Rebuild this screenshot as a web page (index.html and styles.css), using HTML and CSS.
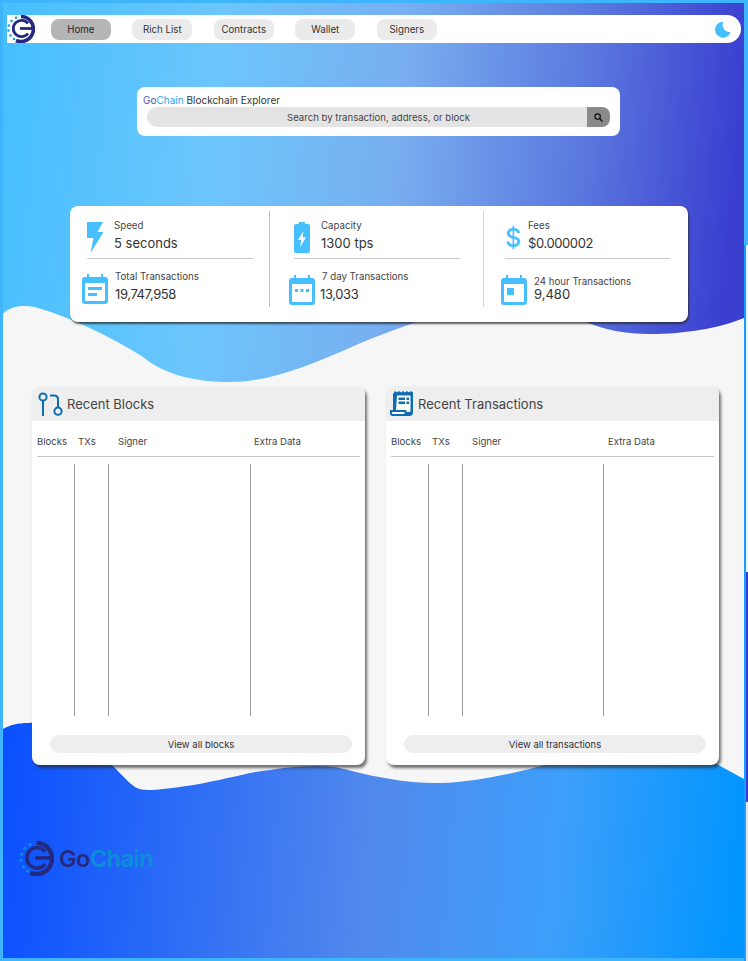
FILE: index.html
```html
<!DOCTYPE html>
<html lang="en">
<head>
    <meta charset="UTF-8">
    <meta name="viewport" content="width=device-width, initial-scale=1.0">
    <title>GoChain Blockchain Explorer</title>
    <link rel="stylesheet" href="styles.css">
</head>
<body>
    <div class="page">
        <!-- gradient backdrop and the two waves -->
        <svg class="backdrop" viewBox="0 0 748 961">
            <defs>
                <linearGradient id="top-grad" gradientUnits="userSpaceOnUse" x1="0" y1="0" x2="744" y2="70">
                    <stop offset="0" stop-color="#45bfff"/>
                    <stop offset="0.3" stop-color="#6cc6fb"/>
                    <stop offset="0.55" stop-color="#78aeef"/>
                    <stop offset="0.8" stop-color="#5a77de"/>
                    <stop offset="1" stop-color="#3a3fd0"/>
                </linearGradient>
                <linearGradient id="bottom-grad" gradientUnits="userSpaceOnUse" x1="0" y1="800" x2="744" y2="860">
                    <stop offset="0" stop-color="#0a50ff"/>
                    <stop offset="0.5" stop-color="#5189ec"/>
                    <stop offset="0.75" stop-color="#3d9ffa"/>
                    <stop offset="1" stop-color="#0095ff"/>
                </linearGradient>
            </defs>
            <rect width="748" height="961" fill="#3eb4fb"/>
            <rect x="3" y="3" width="741" height="420" fill="url(#top-grad)"/>
            <path fill="#f6f6f6" d="M3 314 C10 306 24 304 38 308 C72 318 110 336 143 357 C165 375 195 382 230 382 C270 382 310 365 345 350 C370 338 395 330 416 322 L586 322 C605 330 625 334 650 334 C685 334 720 328 744 318 L744 800 L3 800 Z"/>
            <path fill="url(#bottom-grad)" d="M3 729 C10 725 18 723 28 723 L60 720 L113 766 C122 775 128 782 135 787 C140 790 146 790 152 790 C190 787 215 781 250 773 C280 768 310 764 335 767 C350 770 365 775 385 778 C405 782 420 783 440 783 C475 782 510 774 545 765 L700 755 L744 779 L744 958 L3 958 Z"/>
            <rect x="744" y="245" width="2" height="716" fill="#1a9bff"/>
            <rect x="746" y="245" width="2" height="327" fill="#eaf6ff"/>
            <rect x="746" y="572" width="2" height="230" fill="#3a3fd0"/>
            <rect x="746" y="802" width="2" height="159" fill="#e8e8e8"/>
        </svg>

        <nav class="navbar">
            <svg class="nav-logo" viewBox="0 0 28 28">
                <path d="M14 1.5 A12.5 12.5 0 1 1 9 25.5" fill="none" stroke="#25297f" stroke-width="3.6"/>
                <path d="M21 8.5 A8.2 8.2 0 1 0 21 18.5" fill="none" stroke="#25297f" stroke-width="2.8"/>
                <path d="M13 13.5 H25" fill="none" stroke="#25297f" stroke-width="2.8"/>
                <g fill="#1e9be8">
                    <circle cx="9" cy="2.8" r="1.3"/><circle cx="4.6" cy="6" r="1.3"/>
                    <circle cx="2" cy="10.5" r="1.3"/><circle cx="1.5" cy="15.5" r="1.3"/>
                    <circle cx="3.5" cy="20.5" r="1.3"/><circle cx="7" cy="24" r="1.3"/>
                </g>
            </svg>
            <a class="nav-btn active">Home</a>
            <a class="nav-btn">Rich List</a>
            <a class="nav-btn">Contracts</a>
            <a class="nav-btn">Wallet</a>
            <a class="nav-btn">Signers</a>
            <svg class="moon" viewBox="0 0 16 16">
                <path d="M8.2 0.2 A8 8 0 1 0 15.6 10.6 A7.4 7.4 0 0 1 8.2 0.2 Z" fill="#45bfff"/>
            </svg>
        </nav>

        <section class="search-card">
            <div class="search-title"><span class="go">Go</span><span class="chain">Chain</span> Blockchain Explorer</div>
            <div class="search-bar">
                <div class="search-input">Search by transaction, address, or block</div>
                <div class="search-btn">
                    <svg viewBox="0 0 10 10" width="9" height="9">
                        <circle cx="4" cy="4" r="3" fill="none" stroke="#111" stroke-width="1.4"/>
                        <path d="M6.2 6.2 L9.4 9.4" stroke="#111" stroke-width="1.6"/>
                    </svg>
                </div>
            </div>
        </section>

        <section class="stats-card">
            <div class="stats-col">
                <div class="stat stat-top">
                    <div class="stat-icon">
                        <svg viewBox="0 0 17 31" width="17" height="31"><path d="M0 0 H16 L10.5 10 H16.5 L3.5 31 L6.5 16 H0 Z" fill="#45bfff"/></svg>
                    </div>
                    <div>
                        <div class="stat-label">Speed</div>
                        <div class="stat-value">5 seconds</div>
                    </div>
                </div>
                <div class="stat stat-bottom">
                    <svg class="cal" viewBox="0 0 26 30"><use href="#cal-shape"/><path d="M6 13 H20 V16 H6 Z M6 19 H15 V22 H6 Z" fill="#45bfff"/></svg>
                    <div>
                        <div class="stat-label">Total Transactions</div>
                        <div class="stat-value num">19,747,958</div>
                    </div>
                </div>
            </div>
            <div class="stats-col">
                <div class="stat stat-top">
                    <div class="stat-icon">
                        <svg viewBox="0 0 16 31" width="16" height="31">
                            <path d="M5 0 H11 V2 H14 Q16 2 16 4 V29 Q16 31 14 31 H2 Q0 31 0 29 V4 Q0 2 2 2 H5 Z" fill="#45bfff"/>
                            <path d="M9.5 9 L4 18 H7.2 L6.2 25 L12 15.5 H8.6 Z" fill="#fff"/>
                        </svg>
                    </div>
                    <div>
                        <div class="stat-label">Capacity</div>
                        <div class="stat-value">1300 tps</div>
                    </div>
                </div>
                <div class="stat stat-bottom">
                    <svg class="cal" viewBox="0 0 26 30"><use href="#cal-shape"/><path d="M6 14 H9 V17 H6 Z M11.5 14 H14.5 V17 H11.5 Z M17 14 H20 V17 H17 Z" fill="#45bfff"/></svg>
                    <div>
                        <div class="stat-label">7 day Transactions</div>
                        <div class="stat-value num pull">13,033</div>
                    </div>
                </div>
            </div>
            <div class="stats-col">
                <div class="stat stat-top">
                    <div class="stat-icon icon-dollar">$</div>
                    <div>
                        <div class="stat-label">Fees</div>
                        <div class="stat-value num">$0.000002</div>
                    </div>
                </div>
                <div class="stat stat-bottom">
                    <svg class="cal" viewBox="0 0 26 30"><use href="#cal-shape"/><path d="M6 13 H13 V20 H6 Z" fill="#45bfff"/></svg>
                    <div>
                        <div class="stat-label low">24 hour Transactions</div>
                        <div class="stat-value tight">9,480</div>
                    </div>
                </div>
            </div>
        </section>

        <svg class="defs-only">
            <defs>
                <path id="cal-shape" fill="#45bfff" fill-rule="evenodd" d="M5 0 H7 V3 H19 V0 H21 V3 H23 Q26 3 26 6 V27 Q26 30 23 30 H3 Q0 30 0 27 V6 Q0 3 3 3 H5 Z M3 9 V26 Q3 27 4 27 H22 Q23 27 23 26 V9 Z"/>
            </defs>
        </svg>

        <div class="tables">
            <section class="panel">
                <header class="panel-head">
                    <svg class="panel-icon" viewBox="0 0 25 26">
                        <g fill="none" stroke="#0f6cb0" stroke-width="2">
                            <circle cx="5" cy="6" r="3.6"/>
                            <path d="M5 9.6 V25"/>
                            <path d="M12 4.5 H16 Q20 4.5 20 8.5 V16.5"/>
                            <circle cx="20" cy="20.2" r="3.6"/>
                        </g>
                    </svg>
                    <h2>Recent Blocks</h2>
                </header>
                <div class="cols">
                    <span class="col-blocks">Blocks</span>
                    <span class="col-txs">TXs</span>
                    <span class="col-signer">Signer</span>
                    <span>Extra Data</span>
                </div>
                <div class="col-lines">
                    <i></i><i></i><i></i>
                </div>
                <a class="view-all">View all blocks</a>
            </section>

            <section class="panel">
                <header class="panel-head">
                    <svg class="panel-icon receipt" viewBox="0 0 24 26">
                        <path fill="#0f6cb0" d="M5 0 L7 1.5 L9 0 L11 1.5 L13 0 L15 1.5 L17 0 L19 1.5 L21 0 L23 1.5 V21 Q23 25 19.5 25 H3 Q0 25 0 22.5 V19 H3 V3 Z"/>
                        <path fill="#fff" d="M7 4.5 H20.5 V20 Q20.5 21 19 21 H16.5 V19 H6 Z M2 21 H14.5 V23 H3 Q2 23 2 22 Z"/>
                        <path fill="#0f6cb0" d="M8.5 6.5 H15 V9 H8.5 Z M16.5 6.5 H19 V9 H16.5 Z M8.5 10.5 H15 V13 H8.5 Z M16.5 10.5 H19 V13 H16.5 Z"/>
                    </svg>
                    <h2>Recent Transactions</h2>
                </header>
                <div class="cols">
                    <span class="col-blocks">Blocks</span>
                    <span class="col-txs">TXs</span>
                    <span class="col-signer">Signer</span>
                    <span>Extra Data</span>
                </div>
                <div class="col-lines">
                    <i></i><i></i><i></i>
                </div>
                <a class="view-all">View all transactions</a>
            </section>
        </div>

        <footer class="footer">
            <svg class="foot-logo" viewBox="0 0 28 28">
                <path d="M14 1.5 A12.5 12.5 0 1 1 9 25.5" fill="none" stroke="#25297f" stroke-width="3.6"/>
                <path d="M21 8.5 A8.2 8.2 0 1 0 21 18.5" fill="none" stroke="#25297f" stroke-width="2.8"/>
                <path d="M13 13.5 H25" fill="none" stroke="#25297f" stroke-width="2.8"/>
                <g fill="#0a8fd8">
                    <circle cx="9" cy="2.8" r="1.3"/><circle cx="4.6" cy="6" r="1.3"/>
                    <circle cx="2" cy="10.5" r="1.3"/><circle cx="1.5" cy="15.5" r="1.3"/>
                    <circle cx="3.5" cy="20.5" r="1.3"/><circle cx="7" cy="24" r="1.3"/>
                </g>
            </svg>
            <span class="foot-name"><span class="foot-go">Go</span><span class="foot-chain">Chain</span></span>
        </footer>
    </div>
</body>
</html>
```

FILE: styles.css
```css
* {
    box-sizing: border-box;
}
html, body {
    margin: 0;
    padding: 0;
}
body {
    font-family: Inter, "Open Sans", Arial, sans-serif;
    color: #333;
}
.page {
    position: relative;
    width: 748px;
    height: 961px;
    overflow: hidden;
    padding: 15px 7px 0 7px;
}
.backdrop {
    position: absolute;
    left: 0;
    top: 0;
    width: 748px;
    height: 961px;
}
.defs-only {
    position: absolute;
    width: 0;
    height: 0;
}

/* nav */
.navbar {
    position: relative;
    display: flex;
    align-items: center;
    height: 28px;
    background-color: #fff;
    border-radius: 0 14px 14px 0;
    width: 734px;
    padding-right: 10px;
}
.nav-logo {
    width: 28px;
    height: 28px;
    margin-right: 16px;
    flex: none;
}
.nav-btn {
    display: flex;
    align-items: center;
    justify-content: center;
    width: 59.6px;
    height: 21px;
    margin-right: 21.9px;
    border-radius: 8px;
    background-color: #ebebeb;
    font-size: 9.7px;
    color: #333;
}
.nav-btn.active {
    background-color: #b5b5b5;
    color: #222;
}
.moon {
    width: 16px;
    height: 17px;
    margin-left: auto;
}

/* search */
.search-card {
    position: relative;
    width: 483px;
    height: 49px;
    margin: 44px 0 0 130px;
    padding: 7px 10px 0 10px;
    background-color: #fff;
    border-radius: 8px;
}
.search-title {
    font-size: 10px;
    line-height: 12px;
    margin-left: -4px;
    color: #333;
}
.go {
    color: #4a55b0;
}
.chain {
    color: #2fa3ea;
}
.search-bar {
    display: flex;
    height: 20px;
    margin-top: 1px;
}
.search-input {
    flex: 1;
    display: flex;
    align-items: center;
    justify-content: center;
    padding-left: 23px;
    background-color: #e4e4e4;
    border-radius: 10px 0 0 10px;
    font-size: 9.6px;
    color: #444;
}
.search-btn {
    display: flex;
    align-items: center;
    justify-content: center;
    width: 23px;
    background-color: #8a8a8a;
    border-radius: 0 8px 8px 0;
}

/* stats */
.stats-card {
    position: relative;
    display: flex;
    align-items: flex-start;
    width: 618px;
    height: 116px;
    margin: 70px 0 0 63px;
    padding: 5px 0;
    background-color: #fff;
    border-radius: 8px;
    box-shadow: 1px 2px 2px rgba(40, 40, 40, 0.75);
}
.stats-col {
    width: 199px;
    height: 96px;
    padding: 0 16px 0 17px;
}
.stats-col + .stats-col {
    border-left: 1px solid #bfbfbf;
    width: 214px;
    padding: 0 23px 0 24px;
}
.stats-col:last-child {
    border-left: 1px solid #d4d4d4;
    width: 205px;
    padding: 0 18px 0 21px;
}
.stat {
    display: flex;
}
.stat-top {
    height: 48px;
    padding-top: 6px;
    border-bottom: 1px solid #c8c8c8;
    gap: 10px;
}
.stat-bottom {
    position: relative;
    padding-top: 9px;
    margin-left: -5px;
    gap: 7px;
}
.stats-col:last-child .stat-bottom {
    margin-left: -4px;
}
.stat-icon {
    width: 17px;
    margin-top: 5px;
    flex: none;
}
.stat-label {
    font-size: 9.7px;
    line-height: 12px;
    color: #444;
    margin-top: 3px;
}
.stat-label.low {
    margin-top: 8px;
}
.stat-value {
    font-size: 13px;
    line-height: 16px;
    margin-top: 3px;
    color: #333;
}
.stat-value.num {
    letter-spacing: -0.4px;
}
.stat-value.pull {
    margin-left: -2px;
}
.stat-value.tight {
    margin-top: -2px;
}
.icon-dollar {
    width: 13px;
    margin-top: 7px;
    font-size: 25px;
    line-height: 28px;
    font-weight: 500;
    color: #45bfff;
}
.cal {
    width: 26px;
    height: 30px;
    margin-top: 6px;
    flex: none;
}
.stats-col + .stats-col .cal {
    margin-top: 7px;
}

/* tables */
.tables {
    position: relative;
    display: flex;
    gap: 21px;
    margin: 64px 0 0 25px;
}
.panel {
    width: 333px;
    height: 379px;
    background-color: #fff;
    border-radius: 8px;
    box-shadow: 2px 3px 3px rgba(40, 40, 40, 0.65);
    overflow: hidden;
}
.panel-head {
    display: flex;
    align-items: center;
    height: 35px;
    padding-left: 6px;
    gap: 4px;
    background-color: #eeeeee;
}
.panel-head h2 {
    margin: 0;
    font-size: 13px;
    font-weight: 400;
    color: #444;
}
.panel-icon {
    width: 25px;
    height: 26px;
    flex: none;
}
.panel-icon.receipt {
    width: 24px;
    margin-left: -2px;
}
.cols {
    display: flex;
    align-items: center;
    height: 36px;
    margin: 0 5px;
    padding-top: 5px;
    border-bottom: 1px solid #c8c8c8;
    font-size: 9.6px;
    color: #444;
}
.col-blocks {
    width: 41px;
}
.col-txs {
    width: 40px;
}
.col-signer {
    width: 136px;
}
.col-lines {
    display: flex;
    height: 252px;
    margin-top: 7px;
}
.col-lines i {
    display: block;
    width: 1px;
    background-color: #9a9a9a;
    margin-left: 33px;
}
.col-lines i:first-child {
    margin-left: 42px;
}
.col-lines i:last-child {
    margin-left: 141px;
}
.panel + .panel .col-lines i:last-child {
    margin-left: 140px;
}
.view-all {
    display: flex;
    align-items: center;
    justify-content: center;
    height: 18px;
    margin: 19px 13px 0 18px;
    border-radius: 9px;
    background-color: #eeeeee;
    font-size: 9.5px;
    color: #333;
}

/* footer logo */
.footer {
    position: relative;
    display: flex;
    align-items: center;
    gap: 5px;
    margin: 76px 0 0 12px;
}
.foot-logo {
    width: 35px;
    height: 35px;
    flex: none;
}
.foot-name {
    font-size: 23.5px;
    font-weight: 600;
    letter-spacing: -0.5px;
}
.foot-go {
    color: #25297f;
}
.foot-chain {
    color: #0a8fd8;
}
```
